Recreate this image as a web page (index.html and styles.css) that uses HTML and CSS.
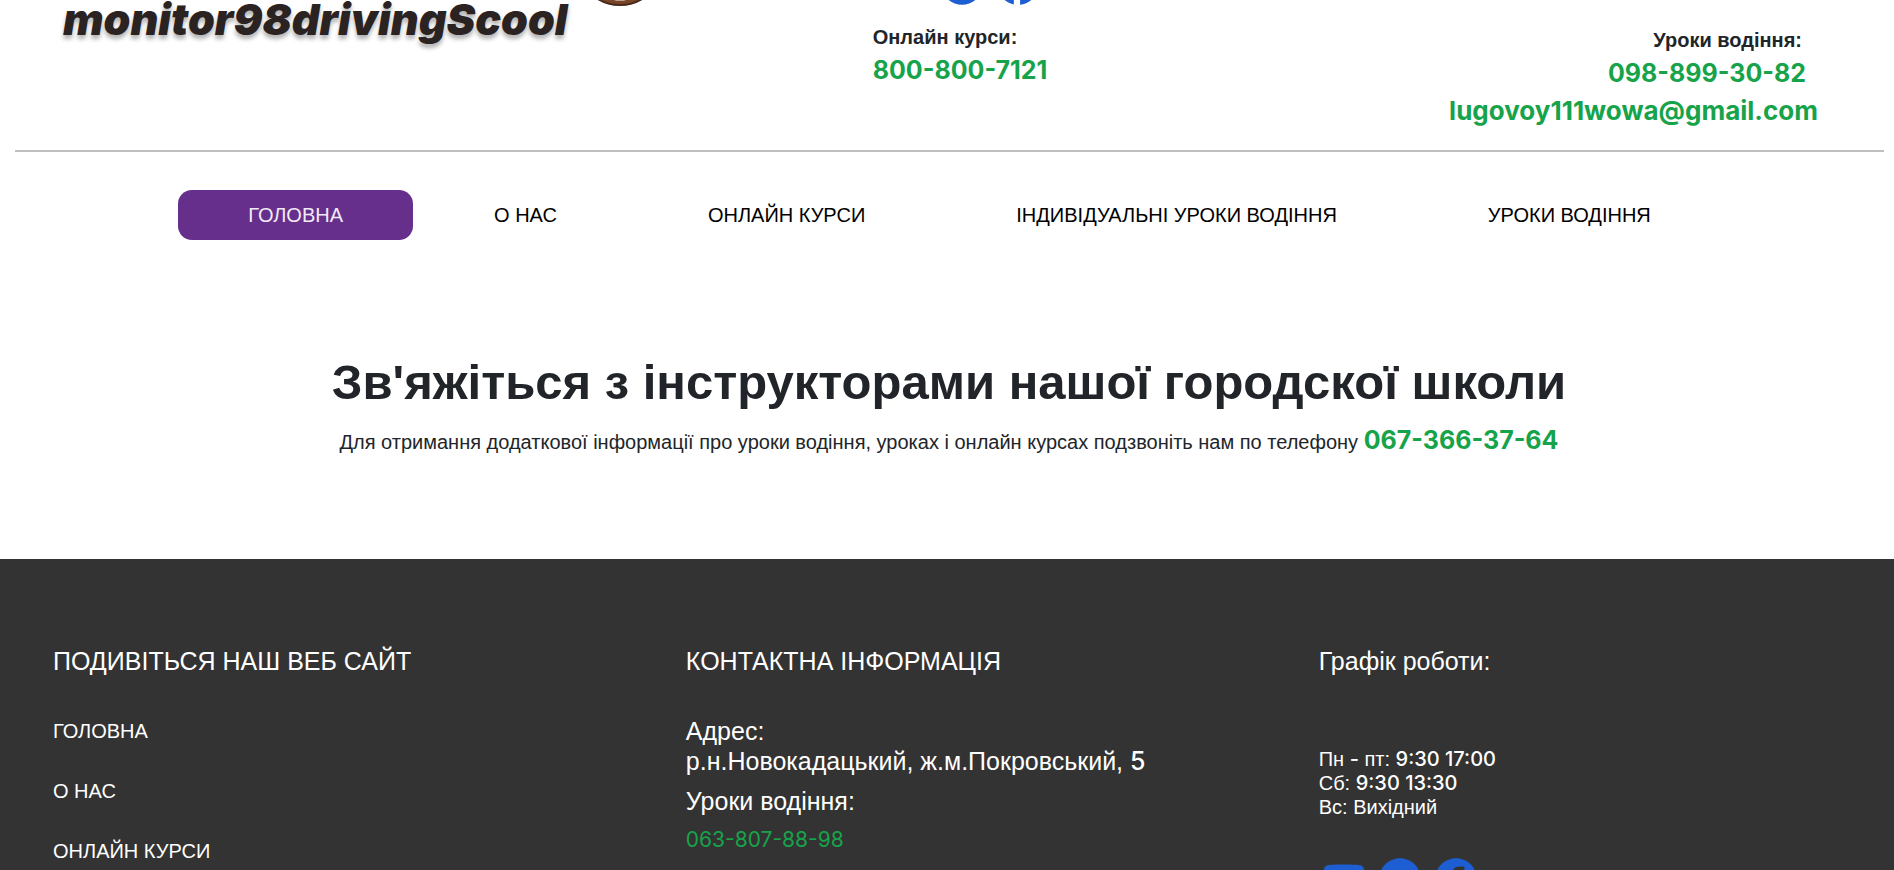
FILE: index.html
```html
<!DOCTYPE html>
<html lang="uk">
<head>
<meta charset="utf-8">
<title>monitor98drivingScool</title>
<link rel="stylesheet" href="styles.css">
</head>
<body>
<svg class="sprite" aria-hidden="true">
  <symbol id="youtube" viewBox="0 0 24 24"><path d="M10 15l5.190-3L10 9v6m11.560-7.830c.13.470.22 1.100.28 1.900.07.800.1 1.490.1 2.090L22 12c0 2.190-.16 3.800-.44 4.830-.25.900-.83 1.480-1.730 1.730-.47.130-1.330.220-2.650.280-1.300.070-2.490.100-3.590.100L12 19c-4.190 0-6.800-.16-7.830-.44-.9-.25-1.480-.83-1.730-1.730-.13-.47-.22-1.100-.28-1.900-.07-.8-.1-1.490-.1-2.090L2 12c0-2.190.16-3.800.44-4.830.25-.9.830-1.480 1.730-1.730.47-.13 1.330-.22 2.650-.28 1.300-.07 2.490-.1 3.590-.1L12 5c4.190 0 6.800.16 7.830.44.900.25 1.480.83 1.730 1.730z"/></symbol>
  <symbol id="telegram" viewBox="0 0 24 24"><path d="M12 2C6.480 2 2 6.480 2 12s4.480 10 10 10 10-4.480 10-10S17.520 2 12 2zm4.640 6.800c-.15 1.580-.8 5.420-1.130 7.190-.14.750-.42 1-.68 1.030-.58.050-1.020-.38-1.580-.75-.88-.58-1.380-.94-2.230-1.500-.99-.65-.35-1.010.22-1.590.15-.15 2.710-2.480 2.760-2.690.01-.03.01-.12-.05-.18-.06-.05-.14-.03-.21-.02-.09.020-1.490.950-4.220 2.790-.4.270-.76.410-1.080.400-.36-.01-1.040-.2-1.550-.37-.63-.2-1.120-.31-1.080-.66.020-.18.270-.36.740-.55 2.920-1.270 4.860-2.110 5.830-2.510 2.780-1.160 3.350-1.360 3.730-1.360.08 0 .27.020.39.120.1.080.13.190.14.270-.01.060.01.240 0 .38z"/></symbol>
  <symbol id="facebook" viewBox="0 0 24 24"><path d="M22 12c0-5.520-4.480-10-10-10S2 6.480 2 12c0 4.840 3.440 8.870 8 9.800V15H8v-3h2V9.500C10 7.570 11.570 6 13.500 6H16v3h-2c-.55 0-1 .45-1 1v2h3v3h-3v6.950c5.050-.5 9-4.760 9-9.950z"/></symbol>
</svg>
<header class="header">
  <div class="brand">
    <span class="brand-name">monitor98drivingScool</span>
    <svg class="wheel" viewBox="0 0 88 88" aria-hidden="true"><circle cx="44" cy="44" r="41" fill="#fff" stroke="#7a4526" stroke-width="5"/><circle cx="44" cy="44" r="43" fill="none" stroke="#4a2a1c" stroke-width="2"/></svg>
  </div>
  <div class="courses">
    <div class="socials">
      <a href="#" aria-label="YouTube"><svg><use href="#youtube"/></svg></a>
      <a href="#" aria-label="Telegram"><svg><use href="#telegram"/></svg></a>
      <a href="#" aria-label="Facebook"><svg><use href="#facebook"/></svg></a>
    </div>
    <span class="label">Онлайн курси:</span>
    <a class="phone" href="tel:8008007121">800-800-7121</a>
  </div>
  <div class="lessons">
    <span class="label">Уроки водіння:</span>
    <a class="phone" href="tel:0988993082">098-899-30-82</a>
    <a class="phone mail" href="mailto:lugovoy111wowa@gmail.com">lugovoy111wowa@gmail.com</a>
  </div>
</header>
<nav class="nav">
  <a class="active" href="#">ГОЛОВНА</a>
  <a href="#">О НАС</a>
  <a href="#">ОНЛАЙН КУРСИ</a>
  <a href="#">ІНДИВІДУАЛЬНІ УРОКИ ВОДІННЯ</a>
  <a href="#">УРОКИ ВОДІННЯ</a>
</nav>
<main class="contact">
  <h1>Зв'яжіться з інструкторами нашої городскої школи</h1>
  <p>Для отримання додаткової інформації про уроки водіння, уроках і онлайн курсах подзвоніть нам по телефону <a class="phone" href="tel:0673663764">067-366-37-64</a></p>
</main>
<footer class="footer">
  <section>
    <h2>ПОДИВІТЬСЯ НАШ ВЕБ САЙТ</h2>
    <ul class="links">
      <li><a href="#">ГОЛОВНА</a></li>
      <li><a href="#">О НАС</a></li>
      <li><a href="#">ОНЛАЙН КУРСИ</a></li>
    </ul>
  </section>
  <section>
    <h2>КОНТАКТНА ІНФОРМАЦІЯ</h2>
    <address class="address">
      <p>Адрес:<br>р.н.Новокадацький, ж.м.Покровський, <span class="num">5</span></p>
      <p>Уроки водіння:</p>
      <a href="tel:0638078898">063-807-88-98</a>
    </address>
  </section>
  <section>
    <h2>Графік роботи:</h2>
    <p class="hours">Пн <span class="num">-</span> пт: <span class="num">9:30 17:00</span><br>Сб: <span class="num">9:30 13:30</span><br>Вс: Вихідний</p>
    <div class="socials">
      <a href="#" aria-label="YouTube"><svg><use href="#youtube"/></svg></a>
      <a href="#" aria-label="Telegram"><svg><use href="#telegram"/></svg></a>
      <a href="#" aria-label="Facebook"><svg><use href="#facebook"/></svg></a>
    </div>
  </section>
</footer>
</body>
</html>
```
FILE: styles.css
```css
* { box-sizing: border-box; }
html { overflow: hidden; }
body {
  margin: 0;
  background: #fff;
  color: #212529;
  font: 20px/24px "Liberation Sans", Arial, sans-serif;
}
h1, h2, p, ul { margin: 0; padding: 0; }
a { color: inherit; text-decoration: none; }
.sprite { display: none; }

/* The top of the header is scrolled out of view */
.header {
  display: grid;
  grid-template-columns: 46% 1fr 1fr;
  margin: -41px 10px 0 15px;
  padding-bottom: 20px;
  border-bottom: 2px solid #bfbfbf;
}
.brand { display: flex; align-items: flex-start; padding-left: 48px; }
.brand-name {
  margin-top: 41px;
  color: #2b2222;
  font: italic 900 43px/38px Inter, sans-serif;
  text-shadow: 0 4px 4px rgba(0, 0, 0, 0.3);
}
.wheel { width: 88px; height: 88px; margin: -41px 0 0 8px; }
.socials { display: flex; gap: 6px; }
.socials a { width: 50px; height: 50px; }
.socials svg { display: block; width: 50px; height: 50px; fill: #1d5fd3; }
.courses { display: flex; flex-direction: column; align-items: flex-start; margin-left: -2px; }
.courses .socials { margin: 0 0 16px 8px; }
.label { padding-bottom: 2px; font-weight: 700; }
.phone { color: #17a34a; font: 700 25px/38px Inter, sans-serif; }
.lessons {
  display: flex;
  flex-direction: column;
  align-items: flex-end;
  padding: 69px 66px 0 0;
}
.lessons .label { padding-right: 16px; }
.lessons .phone { padding-right: 12px; }
.lessons .mail { padding-right: 0; font-size: 26px; }

.nav { display: flex; justify-content: center; gap: 11px; padding: 38px 0 0 5px; }
.nav a { padding: 13px 70px; border-radius: 14px; color: #000; }
.nav .active { background: #662f8c; color: #f1eaf5; }

.contact { padding: 112px 0 98px 4px; text-align: center; }
.contact h1 { font-size: 49px; line-height: 60px; }
.contact p { padding-top: 9px; line-height: 38px; }

.footer {
  display: grid;
  grid-template-columns: 11fr 11fr 10fr;
  padding: 87px 0 32px 53px;
  background: #333;
  color: #fff;
}
.footer h2 { font-size: 25px; font-weight: 400; line-height: 30px; }
.links { list-style: none; padding-top: 43px; }
.links li { padding: 0 0 36px; }
.address { padding-top: 40px; font-size: 25px; font-style: normal; line-height: 30px; }
.address p { margin-bottom: 10px; }
.address a { display: block; color: #17a34a; font: 400 21px/28px Inter, sans-serif; }
.num { font-family: Inter, sans-serif; font-weight: 500; }
.hours { padding-top: 71px; }
.hours + .socials { padding-top: 35px; }
```
